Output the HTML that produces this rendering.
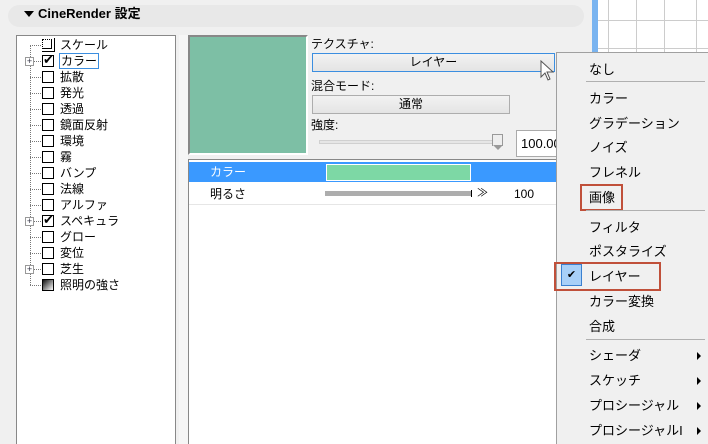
<!DOCTYPE html>
<html><head><meta charset="utf-8"><style>
*{margin:0;padding:0;box-sizing:border-box}
html,body{width:708px;height:444px;overflow:hidden}
body{background:#f0f0f0;position:relative;font-family:"Liberation Sans","Noto Sans CJK JP",sans-serif;font-size:12px;color:#000}
.a{position:absolute}
.t{position:absolute;white-space:nowrap;line-height:16px}
.cb{position:absolute;left:42px;width:12px;height:12px;border:1px solid #000;background:#fff}
.hd{position:absolute;left:30px;width:11px;border-top:1px dotted #777}
.pl{position:absolute;left:25px;width:9px;height:9px;border:1px solid #999;background:#fff;font-size:9px;line-height:7px;text-align:center;color:#334}
.mi{position:absolute;left:589px;font-size:13px;line-height:16px;white-space:nowrap}
.sep{position:absolute;left:586px;width:119px;border-top:1px solid #b0b0b0}
.ar{position:absolute;left:697px;width:0;height:0;border-left:4px solid #000;border-top:4px solid transparent;border-bottom:4px solid transparent}
</style></head><body>
<div class="a" style="left:598px;top:0;width:110px;height:52px;background:#fff"></div>
<div class="a" style="left:592px;top:0;width:6px;height:52px;background:#7ab4f0"></div>
<div class="a" style="left:608px;top:0;width:1px;height:52px;background:#ccc"></div>
<div class="a" style="left:636px;top:0;width:1px;height:52px;background:#ccc"></div>
<div class="a" style="left:664px;top:0;width:1px;height:52px;background:#ccc"></div>
<div class="a" style="left:696px;top:0;width:1px;height:52px;background:#ccc"></div>
<div class="a" style="left:598px;top:20px;width:110px;height:1px;background:#ccc"></div>
<div class="a" style="left:598px;top:48px;width:110px;height:1px;background:#ccc"></div>
<div class="a" style="left:8px;top:5px;width:576px;height:22px;background:#e8e8e8;border-radius:11px"></div>
<div class="a" style="left:24px;top:11px;border-left:5px solid transparent;border-right:5px solid transparent;border-top:6px solid #000"></div>
<div class="t" style="left:38px;top:5px;font-size:13px;font-weight:bold;line-height:18px">CineRender 設定</div>
<div class="a" style="left:16px;top:35px;width:160px;height:409px;background:#fff;border:1px solid #888;border-bottom:none"></div>
<div class="a" style="left:179px;top:35px;width:9px;height:409px;background:#f6f6f6"></div>
<div class="a" style="left:30px;top:45px;height:240px;border-left:1px dotted #777"></div>
<div class="hd" style="top:45px"></div><div class="hd" style="top:61px"></div><div class="hd" style="top:77px"></div><div class="hd" style="top:93px"></div><div class="hd" style="top:109px"></div><div class="hd" style="top:125px"></div><div class="hd" style="top:141px"></div><div class="hd" style="top:157px"></div><div class="hd" style="top:173px"></div><div class="hd" style="top:189px"></div><div class="hd" style="top:205px"></div><div class="hd" style="top:221px"></div><div class="hd" style="top:237px"></div><div class="hd" style="top:253px"></div><div class="hd" style="top:269px"></div><div class="hd" style="top:285px"></div>
<div class="pl" style="top:57px">+</div><div class="pl" style="top:217px">+</div><div class="pl" style="top:265px">+</div>
<div class="a" style="left:42px;top:39px;width:10px;height:10px;border:1px solid #000;border-style:dotted solid solid dotted;background:#fff"></div>
<div class="a" style="left:54px;top:38px;width:1px;height:14px;background:#000"></div>
<div class="a" style="left:42px;top:51px;width:12px;height:1px;background:#000"></div>
<div class="cb" style="top:55px"></div><div class="t" style="left:43px;top:52px;font-size:13px">✔</div>
<div class="cb" style="top:71px"></div><div class="cb" style="top:87px"></div><div class="cb" style="top:103px"></div><div class="cb" style="top:119px"></div><div class="cb" style="top:135px"></div><div class="cb" style="top:151px"></div><div class="cb" style="top:167px"></div><div class="cb" style="top:183px"></div><div class="cb" style="top:199px"></div>
<div class="cb" style="top:215px"></div><div class="t" style="left:43px;top:212px;font-size:13px">✔</div>
<div class="cb" style="top:231px"></div><div class="cb" style="top:247px"></div><div class="cb" style="top:263px"></div>
<div class="a" style="left:42px;top:279px;width:12px;height:12px;border:1px solid #000;background:linear-gradient(135deg,#111,#fff)"></div>
<div class="t" style="left:60px;top:37px">スケール</div>
<div class="t" style="left:59px;top:53px;border:1px solid #3b8ee0;padding:0 1px;line-height:14px">カラー</div>
<div class="t" style="left:60px;top:69px">拡散</div>
<div class="t" style="left:60px;top:85px">発光</div>
<div class="t" style="left:60px;top:101px">透過</div>
<div class="t" style="left:60px;top:117px">鏡面反射</div>
<div class="t" style="left:60px;top:133px">環境</div>
<div class="t" style="left:60px;top:149px">霧</div>
<div class="t" style="left:60px;top:165px">バンプ</div>
<div class="t" style="left:60px;top:181px">法線</div>
<div class="t" style="left:60px;top:197px">アルファ</div>
<div class="t" style="left:60px;top:213px">スペキュラ</div>
<div class="t" style="left:60px;top:229px">グロー</div>
<div class="t" style="left:60px;top:245px">変位</div>
<div class="t" style="left:60px;top:261px">芝生</div>
<div class="t" style="left:60px;top:277px">照明の強さ</div>
<div class="a" style="left:188px;top:35px;width:120px;height:120px;background:#7dbfa5;border:2px solid #888;border-right-color:#fff;border-bottom-color:#fff"></div>
<div class="t" style="left:311px;top:36px">テクスチャ:</div>
<div class="a" style="left:312px;top:53px;width:243px;height:19px;border:1px solid #3b8ee0;background:linear-gradient(#f2f2f2,#e4e4e4);text-align:center;line-height:17px">レイヤー</div>
<div class="t" style="left:311px;top:78px">混合モード:</div>
<div class="a" style="left:312px;top:95px;width:198px;height:19px;border:1px solid #adadad;background:linear-gradient(#f2f2f2,#e4e4e4);text-align:center;line-height:17px">通常</div>
<div class="t" style="left:311px;top:117px">強度:</div>
<div class="a" style="left:319px;top:140px;width:180px;height:4px;background:#e6e6e6;border:1px solid #d0d0d0"></div>
<div class="a" style="left:492px;top:134px;width:11px;height:12px;background:#eee;border:1px solid #999;border-bottom:none"></div>
<div class="a" style="left:493px;top:145px;border-left:5px solid transparent;border-right:5px solid transparent;border-top:5px solid #999"></div>
<div class="a" style="left:516px;top:130px;width:40px;height:27px;background:#fff;border:1px solid #aaa;border-right:none;line-height:25px;padding-left:4px;font-size:13px;overflow:hidden;white-space:nowrap">100.00</div>
<div class="a" style="left:188px;top:159px;width:370px;height:285px;background:#fff;border:1px solid #888;border-bottom:none"></div>
<div class="a" style="left:189px;top:162px;width:368px;height:20px;background:#3a99ff"></div>
<div class="t" style="left:210px;top:164px;color:#fff">カラー</div>
<div class="a" style="left:326px;top:164px;width:145px;height:17px;background:#7dd8a5;border:1px solid #fff"></div>
<div class="t" style="left:210px;top:186px">明るさ</div>
<div class="a" style="left:325px;top:191px;width:146px;height:5px;background:#adadad"></div>
<div class="a" style="left:471px;top:190px;width:1px;height:7px;background:#000"></div>
<div class="t" style="left:477px;top:185px;font-size:11px">≫</div>
<div class="t" style="left:514px;top:186px">100</div>
<div class="a" style="left:189px;top:204px;width:368px;height:1px;background:#e6e6e6"></div>
<div class="a" style="left:556px;top:52px;width:152px;height:392px;background:#f0f0f0;border:1px solid #a0a0a0;border-right:none;border-bottom:none"></div>
<div class="mi" style="top:62px">なし</div>
<div class="sep" style="top:81px"></div>
<div class="mi" style="top:91px">カラー</div>
<div class="mi" style="top:116px">グラデーション</div>
<div class="mi" style="top:140px">ノイズ</div>
<div class="mi" style="top:165px">フレネル</div>
<div class="mi" style="top:190px">画像</div>
<div class="a" style="left:580px;top:184px;width:43px;height:27px;border:2px solid #c0503a"></div>
<div class="sep" style="top:210px"></div>
<div class="mi" style="top:220px">フィルタ</div>
<div class="mi" style="top:244px">ポスタライズ</div>
<div class="a" style="left:561px;top:264px;width:21px;height:22px;background:#a8d0f8;border:1px solid #3a80d0;text-align:center;line-height:20px;font-size:11px">✔</div>
<div class="mi" style="top:269px">レイヤー</div>
<div class="a" style="left:554px;top:262px;width:107px;height:29px;border:2px solid #c0503a"></div>
<div class="mi" style="top:294px">カラー変換</div>
<div class="mi" style="top:319px">合成</div>
<div class="sep" style="top:339px"></div>
<div class="mi" style="top:348px">シェーダ</div><div class="ar" style="top:352px"></div>
<div class="mi" style="top:373px">スケッチ</div><div class="ar" style="top:377px"></div>
<div class="mi" style="top:398px">プロシージャル</div><div class="ar" style="top:402px"></div>
<div class="mi" style="top:423px">プロシージャルI</div><div class="ar" style="top:427px"></div>
<svg class="a" style="left:540px;top:60px" width="16" height="22" viewBox="0 0 16 22"><path d="M1 1 L1 17 L5 13 L8 20 L10 19 L7 12 L13 12 Z" fill="#fff" stroke="#555" stroke-width="1"/></svg>
</body></html>
